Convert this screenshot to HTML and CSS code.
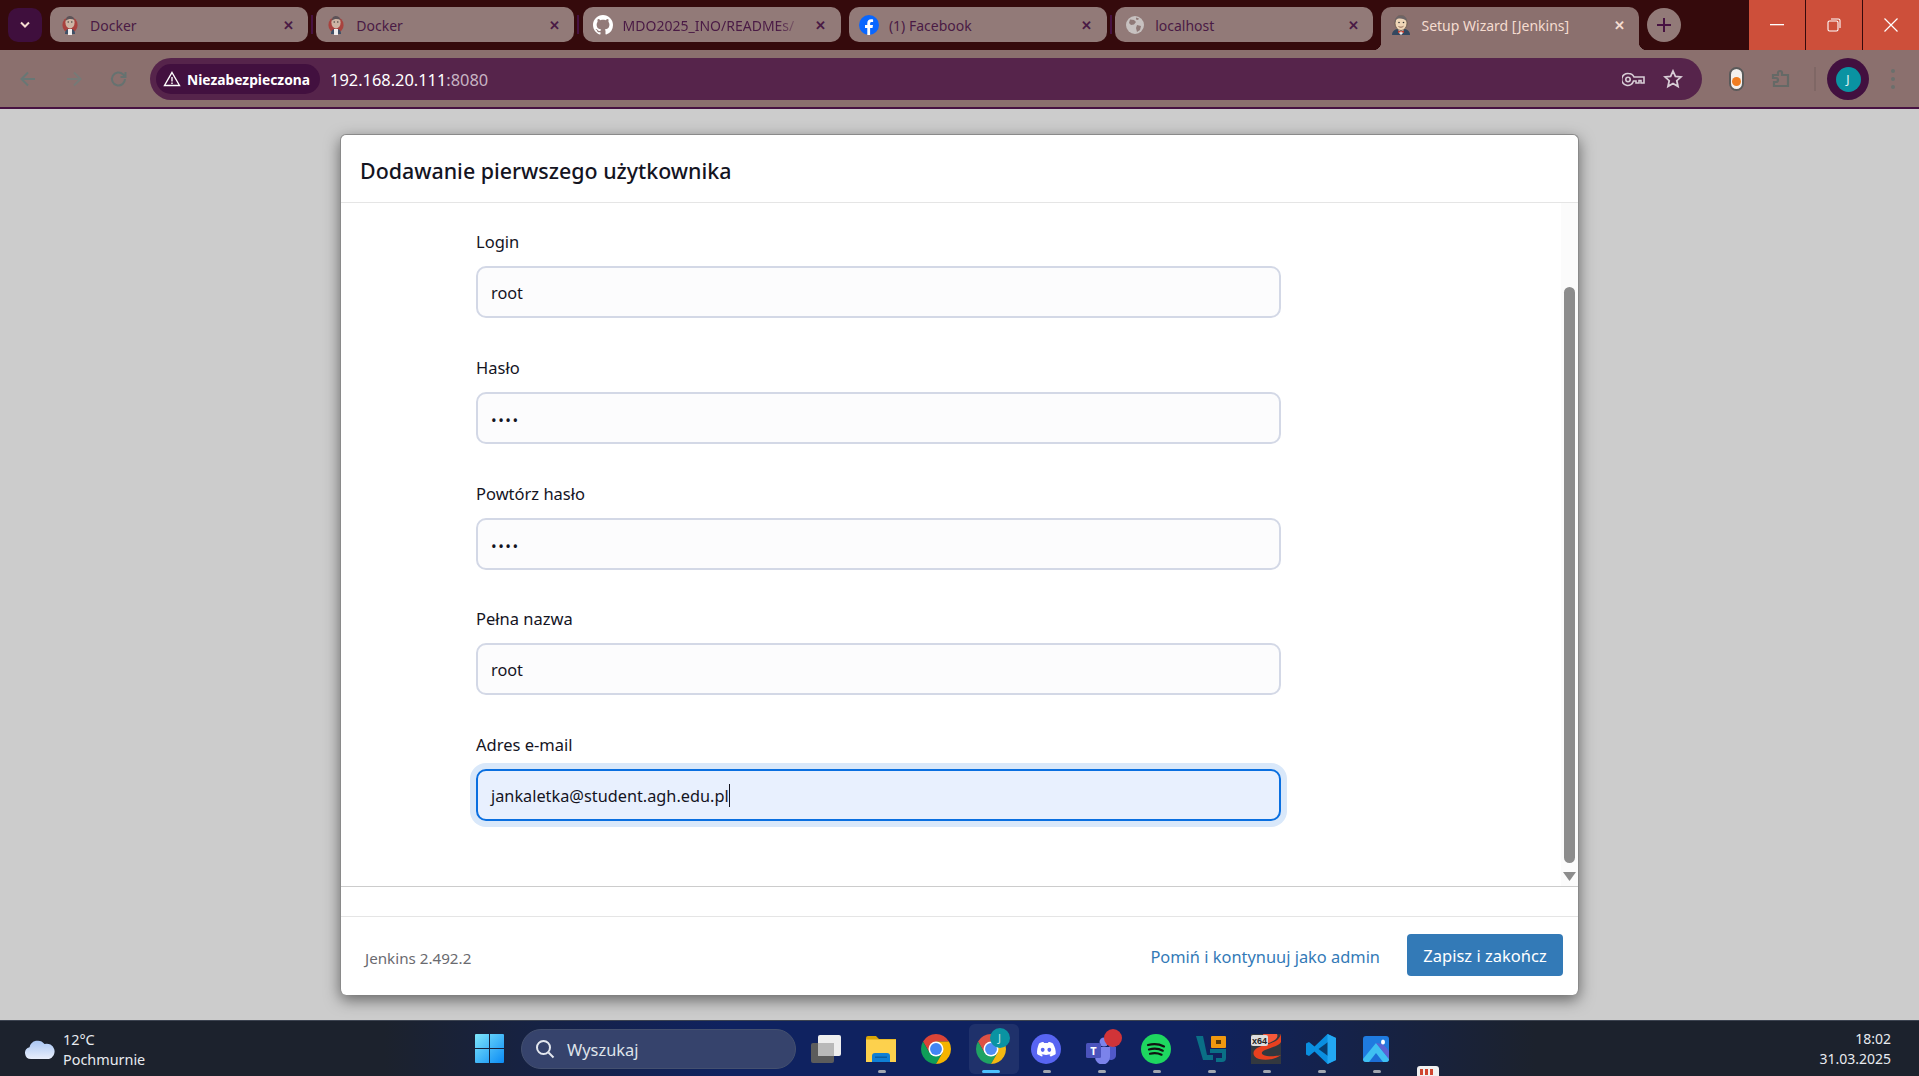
FILE: index.html
```html
<!DOCTYPE html>
<html lang="pl">
<head>
<meta charset="utf-8">
<title>Setup Wizard [Jenkins]</title>
<link rel="stylesheet" href="styles.css">
</head>
<body>
<svg class="defs" width="0" height="0" aria-hidden="true">
  <symbol id="chrome" viewBox="0 0 48 48">
    <path fill="#db4437" d="M44.78 12H24L13.6 30 3.22 12A24 24 0 0 1 44.78 12Z"/>
    <path fill="#0f9d58" d="M3.22 12A24 24 0 0 0 24 48L34.4 30H13.6Z"/>
    <path fill="#f4b400" d="M44.78 12A24 24 0 0 1 24 48L34.4 30 24 12Z"/>
    <circle cx="24" cy="24" r="12" fill="#fff"/>
    <circle cx="24" cy="24" r="9.5" fill="#4285f4"/>
  </symbol>
  <symbol id="jenkins-dim" viewBox="0 0 16 20">
    <ellipse cx="8" cy="10" rx="7.6" ry="8" fill="#a8423e"/>
    <path d="M3 19c0-4 2-5 5-5s5 1 5 5z" fill="#3f4f66"/>
    <rect x="6" y="14" width="4" height="6" fill="#f1eeee"/>
    <ellipse cx="8" cy="7.5" rx="4.6" ry="6" fill="#cdb5a4"/>
    <path d="M3.6 6C4 2 6 1 8 1s4 1 4.4 4C10 3.600 6 3.600 3.600 6z" fill="#5d5358"/>
    <circle cx="6.200" cy="7" r=".7" fill="#333"/><circle cx="9.800" cy="7" r=".7" fill="#333"/>
  </symbol>
  <symbol id="jenkins" viewBox="0 0 18 20">
    <path d="M0 20c0-4 3-6.500 9-6.500s9 2.500 9 6.500z" fill="#33475f"/>
    <path d="M7 14l2 2 2-2 1 3-3 3-3-3z" fill="#eee"/>
    <path d="M6 15.500l3 1 3-1v2.500l-3-1-3 1z" fill="#c0392b"/>
    <ellipse cx="9" cy="8" rx="6" ry="7.500" fill="#f0d6b7" stroke="#5b4a3c" stroke-width=".7"/>
    <path d="M3.200 8C2.500 2 6 .4 9 .4s6.500 2 5.600 6C13 3.500 6 2.500 4 5z" fill="#6c6466"/>
    <circle cx="7" cy="7.500" r=".8" fill="#333"/><circle cx="11.500" cy="7.500" r=".8" fill="#333"/>
    <path d="M6.500 11.500c1.500 1 3.500 1 5-.3" stroke="#7a4b3a" stroke-width=".8" fill="none"/>
  </symbol>
</svg>

<header class="tabstrip">
  <button class="tab-menu" type="button">
    <svg width="12" height="8" viewBox="0 0 12 8"><path d="M2 1.500l4 4 4-4" fill="none" stroke="#f5dcd0" stroke-width="2"/></svg>
  </button>
  <div class="tabs">
    <div class="tab sep">
      <span class="fav"><svg width="16" height="20"><use href="#jenkins-dim"/></svg></span>
      <span class="tab-title">Docker</span><span class="tab-x">✕</span>
    </div>
    <div class="tab sep">
      <span class="fav"><svg width="16" height="20"><use href="#jenkins-dim"/></svg></span>
      <span class="tab-title">Docker</span><span class="tab-x">✕</span>
    </div>
    <div class="tab">
      <span class="fav"><svg width="20" height="20" viewBox="0 0 16 16"><path fill="#fff" d="M8 0C3.580 0 0 3.580 0 8c0 3.540 2.290 6.530 5.470 7.590.4.070.55-.17.55-.38 0-.19-.01-.82-.01-1.490-2.010.37-2.530-.49-2.690-.94-.09-.23-.48-.94-.82-1.130-.28-.15-.68-.52-.01-.53.63-.01 1.080.58 1.230.82.72 1.210 1.870.87 2.330.66.07-.52.28-.87.51-1.070-1.780-.2-3.640-.89-3.640-3.950 0-.87.31-1.590.82-2.150-.08-.2-.36-1.020.08-2.120 0 0 .67-.21 2.200.82.64-.18 1.320-.27 2-.27.68 0 1.360.09 2 .27 1.530-1.040 2.200-.82 2.200-.82.44 1.100.16 1.920.08 2.120.51.56.82 1.270.82 2.150 0 3.070-1.870 3.750-3.650 3.950.29.25.54.73.54 1.480 0 1.070-.01 1.930-.01 2.200 0 .21.15.46.55.38A8.013 8.013 0 0 0 16 8c0-4.420-3.580-8-8-8z"/></svg></span>
      <span class="tab-title fade">MDO2025_INO/READMEs/</span><span class="tab-x">✕</span>
    </div>
    <div class="tab sep">
      <span class="fav"><svg width="20" height="20" viewBox="0 0 20 20"><circle cx="10" cy="10" r="10" fill="#0866ff"/><path fill="#fff" d="M8.300 20v-7H6v-3h2.300V8.200c0-2.600 1.500-4 3.800-4 .8 0 1.500.1 2 .2v2.600h-1.300c-1.300 0-1.700.7-1.700 1.600V10h2.900l-.5 3h-2.400v7z"/></svg></span>
      <span class="tab-title">(1) Facebook</span><span class="tab-x">✕</span>
    </div>
    <div class="tab">
      <span class="fav"><svg width="18" height="18" viewBox="0 0 18 18"><circle cx="9" cy="9" r="9" fill="#c7c1c0"/><path fill="#8f7977" d="M4 3.500l4 .5 2 2-2 2.500-3 .5-2-2zM11 9l4 1-1 4-3 2-1-4zM10 1.500l3 1-1 1.500-2-.5z"/></svg></span>
      <span class="tab-title">localhost</span><span class="tab-x">✕</span>
    </div>
    <div class="tab active">
      <span class="fav"><svg width="18" height="20"><use href="#jenkins"/></svg></span>
      <span class="tab-title">Setup Wizard [Jenkins]</span><span class="tab-x">✕</span>
    </div>
  </div>
  <button class="new-tab" type="button">
    <svg width="14" height="14" viewBox="0 0 14 14"><path d="M7 0v14M0 7h14" stroke="#471242" stroke-width="2"/></svg>
  </button>
  <div class="win-controls">
    <div class="win-btn"><svg width="14" height="2"><rect width="14" height="1.300" fill="#fff"/></svg></div>
    <div class="win-btn"><svg width="14" height="14" viewBox="0 0 14 14" fill="none" stroke="#fff" stroke-width="1.100"><rect x="1" y="3" width="10" height="10" rx="1.500"/><path d="M4 1h7.500A1.500 1.500 0 0 1 13 2.500V10"/></svg></div>
    <div class="win-btn"><svg width="14" height="14" viewBox="0 0 14 14"><path d="M.5.500l13 13M13.500.500l-13 13" stroke="#fff" stroke-width="1.200"/></svg></div>
  </div>
</header>

<nav class="toolbar">
  <div class="nav-icons">
    <svg width="20" height="20" viewBox="0 0 20 20" fill="none" stroke="#687775" stroke-width="2"><path d="M17 10H4M10 3.500L3.500 10l6.500 6.500"/></svg>
    <svg width="20" height="20" viewBox="0 0 20 20" fill="none" stroke="#767a77" stroke-width="2"><path d="M3 10h13M10 3.500l6.500 6.500-6.500 6.500"/></svg>
    <svg width="20" height="20" viewBox="0 0 20 20" fill="none" stroke="#667270" stroke-width="2"><path d="M16 10a6.500 6.500 0 1 1-2-4.700L16 7.500M16.500 3v5h-5"/></svg>
  </div>
  <div class="omnibox">
    <div class="security">
      <svg width="18" height="16" viewBox="0 0 18 16" fill="none" stroke="#fff" stroke-width="1.400"><path d="M9 1.500l7.500 13h-15zM9 6v4.500M9 11.500v1.500"/></svg>
      <span>Niezabezpieczona</span>
    </div>
    <div class="url">192.168.20.111<span class="port">:8080</span></div>
    <div class="omni-actions">
      <svg width="23" height="15" viewBox="0 0 23 15" fill="none" stroke="#d8cdd6" stroke-width="1.600"><path d="M6.500 1.500a6 6 0 0 1 5.500 3.500h10v6h-3v-2.500h-2V11h-3V9h-2.500a6 6 0 1 1-5-7.500z"/><circle cx="6" cy="7.500" r="2.200"/></svg>
      <svg width="20" height="20" viewBox="0 0 20 20" fill="none" stroke="#d8cdd6" stroke-width="1.800"><path d="M10 2l2.400 5.300 5.600.6-4.200 3.800 1.200 5.700L10 14.500l-5 2.900 1.200-5.700L2 7.900l5.600-.6z"/></svg>
    </div>
  </div>
  <div class="ext-pill"><span class="ext-dot"></span></div>
  <svg class="ext-puzzle" width="20" height="20" viewBox="0 0 20 20" fill="none" stroke="#656966" stroke-width="2.200"><path d="M2 6h5V4a2 2 0 0 1 4 0v2h6v11H3v-4h2a2 2 0 0 0 0-4H2z"/></svg>
  <span class="tool-sep"></span>
  <div class="avatar"><span class="avatar-in">J</span></div>
  <div class="kebab"><i></i><i></i><i></i></div>
</nav>

<main class="page">
  <section class="modal">
    <h1 class="modal-title">Dodawanie pierwszego użytkownika</h1>
    <div class="modal-body">
      <form class="form">
        <div class="field"><label>Login</label><div class="input">root</div></div>
        <div class="field"><label>Hasło</label><div class="input dots">••••</div></div>
        <div class="field"><label>Powtórz hasło</label><div class="input dots">••••</div></div>
        <div class="field"><label>Pełna nazwa</label><div class="input">root</div></div>
        <div class="field"><label>Adres e-mail</label><div class="input focus">jankaletka@student.agh.edu.pl<span class="caret"></span></div></div>
      </form>
      <div class="scroll">
        <span class="thumb"></span>
        <svg class="arrow" width="13" height="9" viewBox="0 0 13 9"><path d="M0 0h13L6.500 9z" fill="#8c8c8c"/></svg>
      </div>
    </div>
    <div class="modal-gap"></div>
    <footer class="modal-foot">
      <span class="version">Jenkins 2.492.2</span>
      <a class="skip">Pomiń i kontynuuj jako admin</a>
      <button class="save" type="button">Zapisz i zakończ</button>
    </footer>
  </section>
</main>

<footer class="taskbar">
  <div class="weather">
    <svg width="31" height="21" viewBox="0 0 31 21"><defs><linearGradient id="cl" x1="0" y1="0" x2="0" y2="1"><stop offset="0" stop-color="#a9c6f4"/><stop offset="1" stop-color="#e8eefb"/></linearGradient></defs><path fill="url(#cl)" d="M7 21a6 6 0 0 1-1.500-11.800A8.500 8.500 0 0 1 20.500 6 6.500 6.500 0 0 1 25 21c-.5 0-18 0-18 0z"/></svg>
    <div class="weather-text"><div>12°C</div><div>Pochmurnie</div></div>
  </div>
  <div class="tb-item">
    <svg width="29" height="29" viewBox="0 0 29 29"><defs><linearGradient id="w" x1="0" y1="0" x2="1" y2="1"><stop offset="0" stop-color="#7ee6fb"/><stop offset="1" stop-color="#0b8bf5"/></linearGradient></defs><path fill="url(#w)" d="M1 0h13v14H0V1a1 1 0 0 1 1-1zM15 0h13a1 1 0 0 1 1 1v13H15zM0 15h14v14H1a1 1 0 0 1-1-1zM15 15h14v13a1 1 0 0 1-1 1H15z"/></svg>
  </div>
  <div class="search">
    <svg width="20" height="20" viewBox="0 0 20 20" fill="none" stroke="#e4e8ef" stroke-width="2"><circle cx="8.500" cy="8.500" r="6.500"/><path d="M13.500 13.500L18.500 18.500"/></svg>
    <span>Wyszukaj</span>
  </div>
  <div class="tb-item first-app">
    <svg width="30" height="28" viewBox="0 0 30 28"><rect y="8" width="23" height="20" rx="2" fill="#5c5c5c"/><rect x="7" width="23" height="21" rx="2" fill="#eeeeee"/><rect x="7" y="8" width="16" height="13" fill="#b9b9b9"/></svg>
  </div>
  <div class="tb-item dot">
    <svg width="30" height="26" viewBox="0 0 30 26"><path d="M0 2a2 2 0 0 1 2-2h8l3 3h17v6H0z" fill="#d9a406"/><rect y="3.500" width="30" height="22.500" fill="#fdd14d"/><path d="M6 26v-6a3 3 0 0 1 3-3h12a3 3 0 0 1 3 3v6z" fill="#0f7fd6"/><rect x="9" y="20.500" width="12" height="1.500" fill="#0a5ea3"/></svg>
  </div>
  <div class="tb-item"><svg width="30" height="30"><use href="#chrome"/></svg></div>
  <div class="tb-item active-app">
    <svg width="30" height="30"><use href="#chrome"/></svg>
    <span class="app-badge">J</span>
  </div>
  <div class="tb-item dot">
    <svg width="30" height="30" viewBox="0 0 30 30"><circle cx="15" cy="15" r="15" fill="#5865f2"/><path fill="#fff" d="M8 9.500c2-1 3.500-1.300 4.500-1.400l.5 1c1.300-.2 2.700-.2 4 0l.5-1c1 .1 2.500.4 4.500 1.400 2 3.500 3 7 2.700 10.500-1.900 1.400-3.600 2.100-5.200 2.500l-1.100-1.800c.6-.2 1.200-.5 1.700-.9-3.200 1.500-6.900 1.500-10.200 0 .5.400 1.100.7 1.700.9L11.300 22.500C9.700 22.100 8 21.400 6.100 20 5.800 16.500 6.500 13 8 9.500z"/><ellipse cx="11.700" cy="15.800" rx="1.900" ry="2.100" fill="#5865f2"/><ellipse cx="18.300" cy="15.800" rx="1.900" ry="2.100" fill="#5865f2"/></svg>
  </div>
  <div class="tb-item dot">
    <svg width="30" height="30" viewBox="0 0 30 30"><circle cx="18" cy="8" r="4.500" fill="#7b83eb"/><circle cx="26" cy="10" r="3.500" fill="#5059c9"/><path d="M21 13h9v8a5 5 0 0 1-9 3z" fill="#5059c9"/><path d="M9 13h15v10a7 7 0 0 1-15 0z" fill="#7b83eb"/><rect y="9" width="15" height="15" rx="1.500" fill="#4b53bc"/><text class="teams-t" x="7.500" y="21">T</text></svg>
    <span class="red-badge"></span>
  </div>
  <div class="tb-item dot">
    <svg width="30" height="30" viewBox="0 0 30 30"><circle cx="15" cy="15" r="15" fill="#1ed760"/><path d="M7 11c5.500-1.600 11-1.200 16 1.400M8 15.500c4.800-1.300 9.700-1 13.800 1.200M9 19.700c4-1 8-.8 11.500 1" fill="none" stroke="#111" stroke-width="2.200" stroke-linecap="round"/></svg>
  </div>
  <div class="tb-item dot">
    <svg width="30" height="26" viewBox="0 0 30 26"><path d="M0 0h7l4 19h6v5H7z" fill="#0a6f86"/><path d="M14 13h16v9a4 4 0 0 1-4 4h-6v-4h6v-5H14z" fill="#0a6f86"/><rect x="15" y="0" width="15" height="12" rx="1" fill="#f0980f"/><rect x="20" y="4" width="5" height="4" fill="#5b3b08"/></svg>
  </div>
  <div class="tb-item dot">
    <svg width="30" height="30" viewBox="0 0 30 30"><rect width="30" height="30" fill="#33383f"/><path d="M30 0c-3 10-14 9-24 14-5 3-5 9 2 11 8 2 17 0 22-4 0 0-7 2-14 1-6-1-7-4-2-6 7-3 14-4 16-8z" fill="#e8401f"/><path d="M12 0h14c2 4-3 8-12 10z" fill="#f5583a"/><rect y="1" width="17" height="11" rx="2" fill="#ddd"/><text class="x64" x="8.500" y="10">x64</text></svg>
  </div>
  <div class="tb-item dot">
    <svg width="30" height="30" viewBox="0 0 30 30"><path d="M21.500 0L30 4v22l-8.500 4L8.500 17.500 3 22 0 20.500v-11L3 8l5.500 4.500z" fill="#0a8fe0"/><path d="M22 8L12.500 15 22 22z" fill="#083d6e"/><path d="M21.500 0L30 4v22l-8.500 4z" fill="#23a8f2"/></svg>
  </div>
  <div class="tb-item dot">
    <svg width="26" height="26" viewBox="0 0 26 26"><rect width="26" height="26" rx="3" fill="#1f7be0"/><path d="M0 23L13 7l13 16v0a3 3 0 0 1-3 3H3a3 3 0 0 1-3-3z" fill="#3fc0f2"/><path d="M6 26l7-9 7 9z" fill="#1c6ed6"/><path d="M13 7l13 16v-8L20 8z" fill="#5b63d3"/><ellipse cx="20" cy="6" rx="2" ry="2.600" fill="#fff"/></svg>
  </div>
  <div class="tray-peek"><i></i><i></i><i></i></div>
  <div class="clock"><div>18:02</div><div>31.03.2025</div></div>
</footer>
</body>
</html>
```

FILE: styles.css
```css
* { box-sizing: border-box; }
html, body { margin: 0; padding: 0; }
body {
  width: 1919px;
  height: 1076px;
  overflow: hidden;
  display: flex;
  flex-direction: column;
  font-family: "Noto Sans", "Open Sans", "Liberation Sans", sans-serif;
  background: #ccc;
  color: #14141f;
}
.defs { position: absolute; }
button { font-family: inherit; border: 0; padding: 0; }

/* tab strip */
.tabstrip {
  flex: none;
  height: 50px;
  background: #350a0c;
  display: flex;
  align-items: flex-start;
}
.tab-menu {
  width: 34px;
  height: 34px;
  margin: 8px 8px 0;
  border-radius: 10px;
  background: #3f0f3d;
  display: flex;
  align-items: center;
  justify-content: center;
}
.tabs { display: flex; gap: 8.3px; margin-top: 7px; }
.tab {
  position: relative;
  width: 258px;
  height: 35px;
  border-radius: 10px;
  background: #927a78;
  display: flex;
  align-items: center;
  padding: 1px 13px 0 0;
  color: #4a1a45;
  font-size: 14px;
}
.tab.sep::after {
  content: "";
  position: absolute;
  right: -5px;
  top: 8px;
  width: 2px;
  height: 19px;
  background: #471242;
}
.fav { flex: none; width: 40px; display: flex; justify-content: center; align-items: center; }
.tab-title {
  flex: 1;
  white-space: nowrap;
  overflow: hidden;
}
.tab-title.fade {
  -webkit-mask-image: linear-gradient(to right, #000 85%, transparent 100%);
  mask-image: linear-gradient(to right, #000 85%, transparent 100%);
}
.tab-x { flex: none; width: 14px; margin-left: 10px; font-size: 13px; font-weight: 700; text-align: center; }
.tab.active {
  height: 43px;
  border-radius: 10px 10px 0 0;
  background: #8b706e;
  color: #f5dcd0;
  padding-bottom: 8px;
}
.tab.active::before,
.tab.active::after {
  content: "";
  position: absolute;
  bottom: 0;
  width: 8px;
  height: 8px;
}
.tab.active::before { left: -8px; background: radial-gradient(circle at 0 0, transparent 8px, #8b706e 8.500px); }
.tab.active::after { right: -8px; background: radial-gradient(circle at 100% 0, transparent 8px, #8b706e 8.500px); }
.new-tab {
  width: 34px;
  height: 34px;
  margin: 8px 0 0 7.500px;
  border-radius: 50%;
  background: #927a78;
  display: flex;
  align-items: center;
  justify-content: center;
}
.win-controls { margin-left: auto; display: flex; height: 50px; background: #350a0c; gap: 1px; }
.win-btn {
  width: 56px;
  height: 50px;
  background: #cd4f3a;
  display: flex;
  align-items: center;
  justify-content: center;
}

/* toolbar */
.toolbar {
  flex: none;
  height: 59px;
  padding-top: 1px;
  background: #8b706e;
  border-bottom: 2px solid #471242;
  display: flex;
  align-items: center;
}
.nav-icons { display: flex; gap: 25.500px; margin-left: 18px; margin-right: -1px; }
.omnibox {
  width: 1552px;
  height: 42px;
  margin-left: 22px;
  border-radius: 21px;
  background: #56244b;
  display: flex;
  align-items: center;
  padding-left: 6px;
  color: #fff;
}
.security {
  width: 164px;
  height: 30px;
  border-radius: 15px;
  background: #42103f;
  display: flex;
  align-items: center;
  padding-left: 7px;
  gap: 6px;
  font-size: 13.800px;
  font-weight: 700;
}
.url { margin-left: 10px; font-size: 16.400px; }
.port { color: #c8b4c3; }
.omni-actions { margin-left: auto; margin-right: 19px; display: flex; align-items: center; gap: 18px; }
.ext-pill {
  width: 15px;
  height: 24px;
  margin-left: 27px;
  border-radius: 8px;
  border: 2px solid #5a5a5a;
  background: #f4f1ee;
  display: flex;
  align-items: flex-end;
  justify-content: center;
  padding-bottom: 3px;
}
.ext-dot { width: 9px; height: 9px; border-radius: 50%; background: #ef7d22; }
.ext-puzzle { margin-left: 27px; }
.tool-sep { width: 2px; height: 24px; margin-left: 23px; background: #7f6765; }
.avatar {
  width: 42px;
  height: 42px;
  margin-left: 11px;
  border-radius: 50%;
  background: #42103f;
  display: flex;
  align-items: center;
  justify-content: center;
}
.avatar-in {
  width: 25px;
  height: 25px;
  border-radius: 50%;
  background: #0a93a2;
  color: #e6f5f5;
  font-size: 12px;
  display: flex;
  align-items: center;
  justify-content: center;
}
.kebab { margin-left: 22px; display: flex; flex-direction: column; gap: 4px; }
.kebab i { display: block; width: 4px; height: 4px; border-radius: 50%; background: #6b6f6c; }

/* page and modal */
.page { flex: 1; min-height: 0; padding: 25px 0 0 340px; background: #ccc; }
.modal {
  width: 1239px;
  height: 861px;
  background: #fff;
  border: 1px solid #8a8a8a;
  border-width: 1px 1px 0 1px;
  border-radius: 6px;
  box-shadow: 0 5px 15px rgba(0, 0, 0, .5);
  display: flex;
  flex-direction: column;
}
.modal-title {
  flex: none;
  height: 68px;
  margin: 0;
  padding: 3px 0 0 19px;
  display: flex;
  align-items: center;
  font-size: 21.400px;
  font-weight: 500;
  color: #14141f;
  border-bottom: 1px solid #e5e5e5;
}
.modal-body { flex: none; height: 684px; display: flex; justify-content: space-between; border-bottom: 1px solid #ccc; }
.form { padding: 26px 0 0 135px; }
.field { width: 805px; margin-bottom: 36.800px; }
.field label { display: block; height: 26px; margin-bottom: 11px; line-height: 26px; font-size: 16.500px; color: #14141f; }
.input {
  height: 52px;
  border: 2px solid #d3d8e6;
  border-radius: 10px;
  background: #fcfcfd;
  padding-left: 13px;
  font-size: 16.300px;
  line-height: 50px;
  color: #14141f;
}
.input.dots { font-size: 15px; letter-spacing: 1.500px; line-height: 52px; }
.input.focus {
  border-color: #0a6fe0;
  background: #e8f0fe;
  box-shadow: 0 0 0 6px #d9e8fa;
}
.caret { display: inline-block; width: 1px; height: 23px; background: #14141f; vertical-align: -5px; }
.scroll {
  width: 17px;
  background: #fbfbfb;
  display: flex;
  flex-direction: column;
  align-items: center;
  padding-top: 84px;
}
.thumb { flex: none; width: 11px; height: 576px; border-radius: 6px; background: #8c8c8c; }
.arrow { flex: none; margin-top: 9px; }
.modal-gap { flex: none; height: 30px; border-bottom: 1px solid #e5e5e5; }
.modal-foot { flex: 1; display: flex; align-items: flex-start; padding: 17px 15px 0 24px; }
.version { margin-top: 14px; font-size: 15.200px; color: #6a6a6f; margin-right: auto; }
.skip { margin-top: 11px; margin-right: 27px; font-size: 16.400px; color: #337ab7; }
.save {
  width: 156px;
  height: 42px;
  border-radius: 4px;
  background: #337ab7;
  color: #fff;
  font-size: 16.500px;
}

/* taskbar */
.taskbar {
  position: relative;
  flex: none;
  height: 56px;
  border-top: 1px solid #3c4350;
  background: linear-gradient(to right, #1c222d 0, #1c222d 20%, #0f2260 38%, #0f2260 62%, #1c222d 80%, #1c222d 100%);
  display: flex;
  align-items: center;
  color: #e8ebf0;
}
.weather { flex: none; width: 462px; padding-left: 24px; display: flex; align-items: center; gap: 8px; font-size: 14.400px; line-height: 20px; }
.weather-text { margin-top: 2px; }
.tb-item {
  position: relative;
  flex: none;
  width: 55px;
  height: 50px;
  display: flex;
  align-items: center;
  justify-content: center;
}
.tb-item.dot::after,
.active-app::after {
  content: "";
  position: absolute;
  left: 24px;
  bottom: 1px;
  width: 8px;
  height: 3px;
  border-radius: 2px;
  background: #a1a6b0;
}
.search {
  flex: none;
  width: 275px;
  height: 40px;
  margin-left: 4px;
  padding-left: 13px;
  border-radius: 20px;
  border: 1px solid #44506f;
  background: #36436c;
  display: flex;
  align-items: center;
  gap: 12px;
  font-size: 16.400px;
  color: #dfe3ea;
}
.search span { margin-top: 2px; }
.first-app { margin-left: 2.500px; }
.active-app::before {
  content: "";
  position: absolute;
  left: 5px;
  top: 0;
  width: 50px;
  height: 50px;
  border-radius: 6px;
  background: rgba(255, 255, 255, .07);
}
.active-app::after { left: 18px; width: 18px; background: #4cc2ff; }
.app-badge {
  position: absolute;
  left: 26px;
  top: 4px;
  width: 20px;
  height: 20px;
  border-radius: 50%;
  background: #0a93a2;
  color: #bfe5e6;
  font-size: 11px;
  display: flex;
  align-items: center;
  justify-content: center;
}
.red-badge {
  position: absolute;
  left: 30px;
  top: 5px;
  width: 18px;
  height: 18px;
  border-radius: 50%;
  background: #d13438;
}
.teams-t { font-size: 11px; font-weight: 700; fill: #fff; text-anchor: middle; font-family: "Noto Sans", sans-serif; }
.x64 { font-size: 9px; font-weight: 700; fill: #222; text-anchor: middle; font-family: "Liberation Sans", sans-serif; }
.tray-peek {
  flex: none;
  align-self: flex-end;
  width: 22px;
  height: 10px;
  margin-left: 13px;
  border-radius: 3px 3px 0 0;
  background: #f1f1f1;
  display: flex;
  gap: 2px;
  padding: 3px 0 0 3px;
}
.tray-peek i { display: block; width: 3px; height: 6px; background: #d0452f; }
.clock { margin-left: auto; padding-right: 28px; text-align: right; font-size: 14px; line-height: 20px; }
```
